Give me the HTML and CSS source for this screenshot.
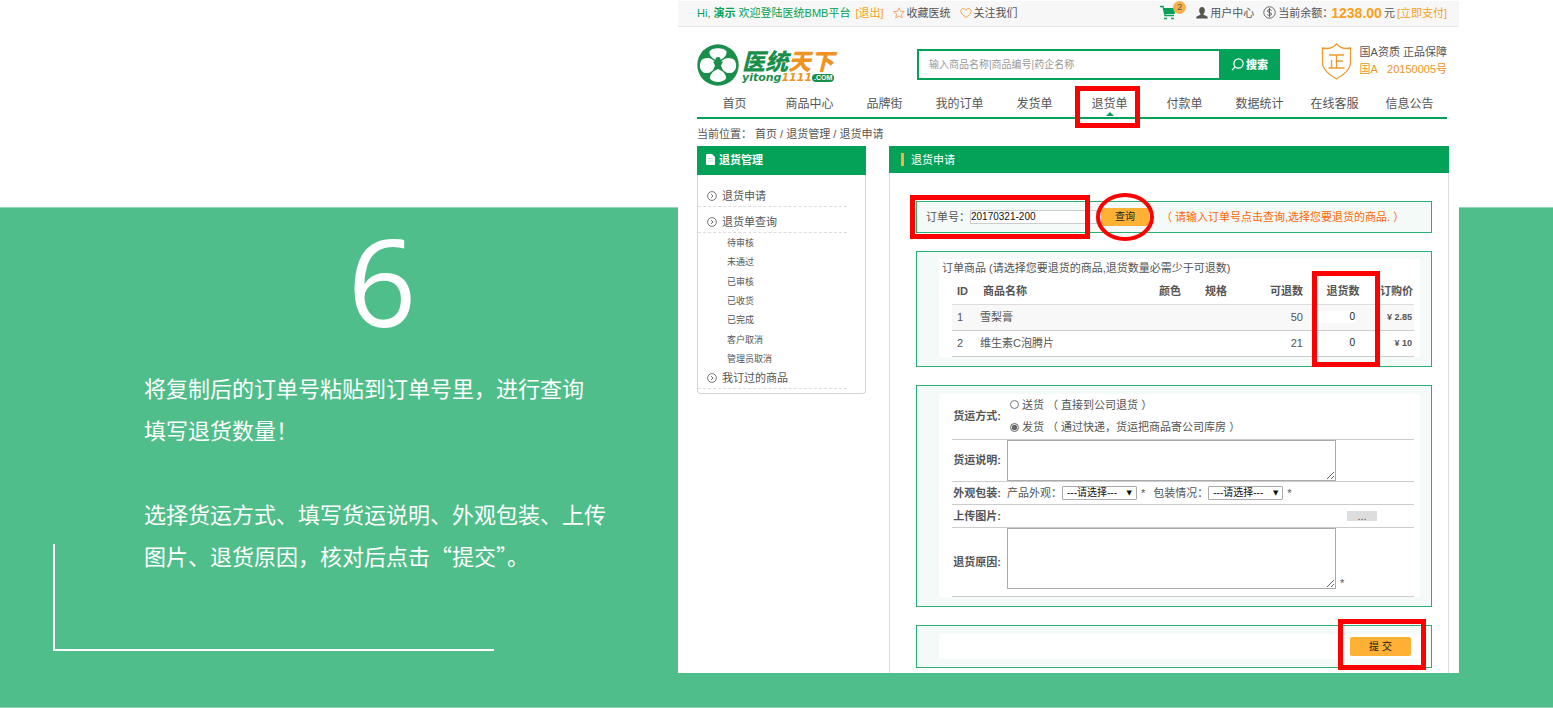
FILE: index.html
```html
<!DOCTYPE html>
<html lang="zh-CN">
<head>
<meta charset="utf-8">
<title>退货申请</title>
<link rel="stylesheet" href="styles.css">
</head>
<body>
<main class="slide">
  <section class="intro">
    <h1 class="step">6</h1>
    <div class="steps-text">
      <p>将复制后的订单号粘贴到订单号里，进行查询<br>填写退货数量！</p>
      <p>选择货运方式、填写货运说明、外观包装、上传<br>图片、退货原因，核对后点击“提交”。</p>
    </div>
    <div class="corner"></div>
  </section>

  <section class="shop">
    <header class="topbar">
      <span class="hello">Hi, <b>演示</b> 欢迎登陆医统BMB平台</span>
      <a class="accent" href="#">[退出]</a>
      <a class="with-icon" href="#"><svg width="12" height="12" viewBox="0 0 12 12" fill="none" stroke="#f7a470"><path d="M6 .8 7.5 4.3l3.8.3-2.9 2.5.9 3.8L6 8.900 2.700 10.900l.9-3.800L.7 4.600l3.800-.3z"/></svg>收藏医统</a>
      <a class="with-icon" href="#"><svg width="12" height="12" viewBox="0 0 12 12" fill="none" stroke="#f7a040"><path d="M6 10.500C3.500 8.500.8 6.500.8 4.200.8 1.300 4.500.6 6 3.200 7.500.6 11.200 1.300 11.200 4.200 11.200 6.500 8.500 8.500 6 10.500z"/></svg>关注我们</a>
      <a class="cart" href="#" aria-label="购物车"><svg width="17" height="15" viewBox="0 0 17 15"><path d="M0 1.500h3L5 10.500h9" fill="none" stroke="#04a258" stroke-width="1.300"/><path d="M3.500 3H16l-1.500 6H5z" fill="#04a258"/><path d="M4 13.500h3M11 13.500h3" stroke="#04a258" stroke-width="1.500"/></svg><span class="badge">2</span></a>
      <a class="with-icon" href="#"><svg width="12" height="12" viewBox="0 0 12 12" fill="#555"><ellipse cx="6" cy="3.600" rx="2.800" ry="3.500"/><path d="M4.500 6h3v1.800l3.500 1.400q.8.400.8 2.300H.2Q.2 9.600 1 9.200l3.500-1.400z"/></svg>用户中心</a>
      <span class="balance"><svg width="13" height="13" viewBox="0 0 13 13" fill="none" stroke="#666"><circle cx="6.500" cy="6.500" r="5.700"/><path d="M8.700 4.600Q8 3.600 6.500 3.600 4.600 3.600 4.600 5q0 1.200 1.900 1.500T8.500 8q0 1.400-2 1.400Q5 9.400 4.300 8.400M6.500 2v9"/></svg><span>当前余额：</span><strong>1238.00</strong><span class="unit">元</span><a class="accent" href="#">[立即支付]</a></span>
    </header>

    <div class="page">
      <div class="brandbar">
        <a class="logo" href="#">
          <svg width="42" height="42" viewBox="0 0 42 42"><circle cx="21" cy="21" r="20.700" fill="#1a8f4c"/><g fill="#fff"><path d="M18.500 16C14 13.500 12 10.500 12.500 7.500 14.500 3 27.500 3 29.500 7.500 30 10.500 28 13.500 23.500 16z"/><path d="M21 24C16 27 12.500 31 13 34.500 15.500 39 26.500 39 29 34.500 29.500 31 26 27 21 24z"/><path d="M18.500 18.500C15 13.500 10 13 6 15 1.500 18 2 26 6.500 28.500 12 30.500 18 27 18.500 18.500z"/><path d="M23.500 18.500C27 13.500 32 13 36 15 40.500 18 40 26 35.500 28.500 30 30.500 24 27 23.500 18.500z"/></g><g fill="#1a8f4c"><circle cx="21" cy="15.500" r="2.600"/><path d="M16 17.500 21 18l5-.5-2 4 1 5.500-4-2-4 2 1-5.500z"/></g></svg>
          <span class="logo-text"><span class="logo-cn">医统<em>天下</em></span><span class="logo-en">yitong<em>1111</em><small>.COM</small></span></span>
        </a>
        <form class="search">
          <input type="text" aria-label="搜索商品" placeholder="输入商品名称|商品编号|药企名称">
          <button type="button"><svg width="13" height="13" viewBox="0 0 13 13" fill="none" stroke="#fff" stroke-width="1.200"><circle cx="7.500" cy="5.500" r="4.600"/><path d="M4.200 8.800 1 12"/></svg>搜索</button>
        </form>
        <div class="cert">
          <svg width="31" height="37" viewBox="0 0 31 37" fill="none" stroke="#ef9a2a" stroke-width="1.300"><path d="M15.500 1Q20 5.500 25 5.500q2.500 0 4.500-.5v15q0 8-14 16Q1.500 28 1.500 20V5Q3.500 5.500 6 5.500 11 5.500 15.500 1z"/><path d="M8 12h15M15.500 12v13M15.500 18H22M10.500 17v8M7.500 25h16"/></svg>
          <p>国A资质 正品保障<br><span class="cert-no">国A&nbsp;&nbsp; 20150005号</span></p>
        </div>
      </div>

      <nav class="nav">
        <a href="#">首页</a><a href="#">商品中心</a><a href="#">品牌街</a><a href="#">我的订单</a><a href="#">发货单</a><a class="current" href="#">退货单<i class="mark mark-nav"></i></a><a href="#">付款单</a><a href="#">数据统计</a><a href="#">在线客服</a><a href="#">信息公告</a>
      </nav>
      <div class="crumbs">当前位置： <a href="#">首页</a> / <a href="#">退货管理</a> / <a href="#">退货申请</a></div>
    </div>

    <div class="columns">
      <aside class="side">
        <h2><svg width="9" height="11" viewBox="0 0 9 11" fill="#fff"><path d="M1 0h5l3 3v7q0 1-1 1H1q-1 0-1-1V1q0-1 1-1z"/><path d="M2 4.500h5M2 7h5" stroke="#bfe5d0"/></svg>退货管理</h2>
        <div class="side-body">
          <a class="group" href="#"><svg width="10" height="10" viewBox="0 0 10 10" fill="none" stroke="#777"><circle cx="5" cy="5" r="4.400"/><path d="M4 3l2 2-2 2"/></svg>退货申请</a>
          <a class="group spaced" href="#"><svg width="10" height="10" viewBox="0 0 10 10" fill="none" stroke="#777"><circle cx="5" cy="5" r="4.400"/><path d="M4 3l2 2-2 2"/></svg>退货单查询</a>
          <ul class="subs">
            <li><a href="#">待审核</a></li><li><a href="#">未通过</a></li><li><a href="#">已审核</a></li><li><a href="#">已收货</a></li><li><a href="#">已完成</a></li><li><a href="#">客户取消</a></li><li><a href="#">管理员取消</a></li>
          </ul>
          <a class="group" href="#"><svg width="10" height="10" viewBox="0 0 10 10" fill="none" stroke="#777"><circle cx="5" cy="5" r="4.400"/><path d="M4 3l2 2-2 2"/></svg>我订过的商品</a>
        </div>
      </aside>

      <div class="panel">
        <h2>退货申请</h2>
        <form class="panel-body">
          <div class="box lookup">
            <span class="lookup-field"><label for="order">订单号：</label><input id="order" type="text" value="20170321-200"><i class="mark mark-order"></i></span>
            <span class="query"><button class="btn" type="button">查询</button><i class="mark mark-query"></i></span>
            <span class="hint">（ 请输入订单号点击查询,选择您要退货的商品. ）</span>
          </div>

          <div class="box">
            <div class="sheet goods">
              <p class="caption">订单商品 (请选择您要退货的商品,退货数量必需少于可退数)</p>
              <table>
                <thead><tr><th class="c-id">ID</th><th class="c-name">商品名称</th><th class="c-attr">颜色</th><th class="c-attr">规格</th><th class="c-max">可退数</th><th class="c-qty">退货数<i class="mark mark-qty"></i></th><th class="c-price">订购价</th></tr></thead>
                <tbody>
                  <tr class="odd"><td>1</td><td>雪梨膏</td><td></td><td></td><td class="c-max">50</td><td class="c-qty"><input type="text" aria-label="雪梨膏退货数" value="0"></td><td class="c-price">¥ 2.85</td></tr>
                  <tr><td>2</td><td>维生素C泡腾片</td><td></td><td></td><td class="c-max">21</td><td class="c-qty"><input type="text" aria-label="维生素C泡腾片退货数" value="0"></td><td class="c-price">¥ 10</td></tr>
                </tbody>
              </table>
            </div>
          </div>

          <div class="box">
            <div class="sheet fields">
              <div class="row" role="radiogroup" aria-labelledby="ship">
                <span class="name" id="ship">货运方式:</span>
                <div class="radios">
                  <label><input type="radio" name="ship">送货 （ 直接到公司退货 ）</label>
                  <label><input type="radio" name="ship" checked>发货 （ 通过快递，货运把商品寄公司库房 ）</label>
                </div>
              </div>
              <div class="row">
                <label class="name" for="note">货运说明:</label>
                <textarea class="short" id="note"></textarea>
              </div>
              <div class="row">
                <span class="name">外观包装:</span>
                <div class="selects">
                  <label for="look">产品外观：</label><span class="select"><select id="look"><option>---请选择---</option></select></span><span class="req">*</span>
                  <label class="second" for="pack">包装情况：</label><span class="select"><select id="pack"><option>---请选择---</option></select></span><span class="req">*</span>
                </div>
              </div>
              <div class="row upload">
                <span class="name">上传图片:</span>
                <button type="button" aria-label="选择图片">...</button>
              </div>
              <div class="row">
                <label class="name" for="reason">退货原因:</label>
                <textarea class="tall" id="reason"></textarea><span class="req low">*</span>
              </div>
            </div>
          </div>

          <div class="box">
            <div class="sheet submit">
              <span class="send"><button class="btn" type="button">提 交</button><i class="mark mark-send"></i></span>
            </div>
          </div>
        </form>
      </div>
    </div>
  </section>
</main>
</body>
</html>
```

FILE: styles.css
```css
* { box-sizing: border-box; }

body {
  margin: 0;
  background: #fff;
  color: #555;
  font: 11px/16px "Liberation Sans", "Noto Sans CJK SC", sans-serif;
}
h1, h2, p, ul { margin: 0; padding: 0; font-weight: normal; }
ul { list-style: none; }
a { color: inherit; text-decoration: none; }
em, i { font-style: normal; }
svg { display: block; flex: none; }
input, button, select, textarea { margin: 0; padding: 0; border: 0; border-radius: 0; font: inherit; color: inherit; }

.slide {
  display: grid;
  grid-template-columns: minmax(0, 678fr) minmax(0, 781fr) minmax(0, 94fr);
  align-items: start;
  min-height: 100vh;
  padding-bottom: 34px;
  border-bottom: 1px solid #93d6b7;
  background: linear-gradient(#fff 207px, #93d6b7 207px, #93d6b7 208px, #4fbe8a 208px);
}

/* Instruction column */
.intro { position: relative; align-self: stretch; padding-top: 208px; color: #fff; }
.step { padding-left: 86px; text-align: center; font: 120px/146px "Open Sans", sans-serif; }
.steps-text {
  display: grid;
  gap: 42px;
  padding: 12px 0 0 144px;
  font: 22px/42px "Noto Sans CJK SC", sans-serif;
  white-space: nowrap;
}
.corner {
  position: absolute;
  left: 53px;
  right: 184px;
  bottom: 22px;
  height: 107px;
  border: solid #fff;
  border-width: 0 0 2px 2px;
}

/* Shop page */
.shop { background: #fff; border-top: 1px solid #fff; white-space: nowrap; }
.topbar {
  display: flex;
  align-items: center;
  height: 26px;
  padding: 0 12px 2px 19px;
  border-bottom: 1px solid #e8e8e8;
  background: #f7f7f7;
  gap: 9px;
}
.hello { color: #04a258; }
.hello + .accent { margin-left: -4px; }
.accent { color: #f7a11a; }
.with-icon, .balance { display: flex; align-items: center; gap: 2px; }
.cart { position: relative; margin-left: auto; margin-right: 10px; }
.badge {
  position: absolute;
  left: 13px;
  top: -4px;
  width: 13px;
  height: 13px;
  border-radius: 50%;
  background: #f9b04c;
  color: #555;
  font-size: 9px;
  line-height: 13px;
  text-align: center;
}
.balance strong { margin-left: -4px; color: #f7a11a; font-size: 14px; }

.page { padding: 0 12px 0 19px; }
.brandbar { display: flex; align-items: flex-start; padding-top: 16px; }
.logo { display: flex; gap: 3px; width: 220px; padding-top: 1px; }
.logo-text { display: flex; flex-direction: column; padding-top: 5px; color: #1a8f4c; }
.logo em { color: #ef9423; font-style: italic; }
.logo-cn { font: italic 900 23px/22px "Noto Sans CJK SC", sans-serif; }
.logo-en { display: flex; align-items: center; font: italic bold 11px/13px "DejaVu Sans", sans-serif; }
.logo-en small { padding: 0 2px; border-radius: 4px; background: #1a8f4c; color: #fff; font: bold 7px/8px "Liberation Sans", sans-serif; }

.search { display: flex; flex: 0 1 363px; height: 31px; margin-top: 6px; border: solid #04a258; border-width: 2px 0 2px 2px; }
.search input { flex: 1; min-width: 0; padding-left: 10px; background: #fff; font-size: 10px; }
.search input::placeholder { color: #999; opacity: 1; }
.search button {
  display: flex;
  align-items: center;
  justify-content: center;
  gap: 2px;
  width: 61px;
  background: #04a258;
  color: #fff;
  font-weight: 900;
}
.cert { display: flex; gap: 8px; margin-left: auto; }
.cert p { padding-top: 1px; line-height: 17px; }
.cert-no { color: #ef9423; }

.nav {
  display: grid;
  grid-template-columns: repeat(10, 1fr);
  margin-top: 6px;
  border-bottom: 2px solid #04a258;
  font-size: 12px;
  line-height: 25px;
  text-align: center;
}
.nav a { position: relative; }
.current::after {
  content: "";
  position: absolute;
  left: 50%;
  bottom: 1px;
  margin-left: -4px;
  border: solid transparent;
  border-width: 0 4px 4px;
  border-bottom-color: #04a258;
}
.crumbs { padding: 7px 0 4px; }

/* Highlights around the controls to use */
.mark { position: absolute; z-index: 2; border: 5px solid #f00; pointer-events: none; }
.mark-nav { left: 3px; right: 7px; top: -6px; height: 42px; }
.mark-order { left: -16px; right: 7px; top: -14px; bottom: -14px; }
.mark-query { left: -5px; right: -5px; top: -15px; bottom: -15px; border-width: 4px; border-radius: 50%; }
.mark-qty { left: 6px; right: 0; top: -8px; height: 96px; }
.mark-send { left: -12px; right: -15px; top: -18px; bottom: -14px; }

.columns { display: grid; grid-template-columns: minmax(0, 169fr) minmax(0, 560fr); gap: 23px; padding: 0 10px 0 19px; }
.side { align-self: start; }
.side h2 { display: flex; align-items: center; gap: 4px; height: 29px; padding: 0 0 2px 9px; background: #04a258; color: #fff; font-size: 11px; font-weight: bold; }
.side-body { padding: 12px 18px 4px 0; border: 1px solid #d4d4d4; border-top: 0; border-radius: 0 0 4px 4px; }
.group { display: flex; align-items: center; gap: 5px; height: 20px; padding: 0 0 2px 9px; border-bottom: 1px dashed #ddd; }
.spaced { margin-top: 6px; }
.subs { display: grid; grid-auto-rows: 1fr; align-items: center; min-height: 136px; padding-left: 29px; font-size: 9px; line-height: 16px; }

.panel h2 { display: flex; align-items: center; gap: 7px; height: 27px; padding-left: 12px; background: #04a258; color: #fff; font-size: 11px; }
.panel h2::before { content: ""; width: 3px; height: 13px; background: #fbb034; }
.panel-body { display: grid; gap: 18px; padding: 28px 16px 5px 26px; border: solid #ddd; border-width: 0 1px; }
.box { border: 1px solid #2bae71; background: #f4faf7; min-width: 0; }
.sheet { margin: 7px 11px 9px 22px; padding: 0 6px 0 13px; background: #fff; }

.lookup { display: flex; align-items: center; height: 32px; padding-left: 9px; }
.lookup-field { position: relative; display: flex; align-items: center; height: 16px; }
.lookup input { width: 127px; height: 14px; border: 1px solid #ccc; background: #fff; color: #111; font-size: 10px; }
.query, .send { position: relative; display: flex; margin-left: 4px; }
.btn { border-radius: 2px; background: #ffb135; color: #222; }
.query .btn { width: 48px; height: 18px; font-size: 10px; line-height: 18px; }
.hint { margin-left: 12px; color: #f60; }

.caption { margin-left: -10px; padding-bottom: 1px; line-height: 19px; }
.goods table { width: 100%; table-layout: fixed; border-collapse: collapse; }
.goods th, .goods td { height: 26px; padding: 0; border-bottom: 1px solid #ccc; text-align: left; }
.goods th { position: relative; height: 25px; border-color: #ddd; }
.goods td:first-child, .goods .c-id { padding-left: 5px; }
.goods .c-name { padding-left: 3px; }
.c-id { width: 28px; }
.c-attr { width: 46px; }
.c-max { width: 55px; }
.c-qty { width: 74px; }
.c-price { width: 34px; }
.goods .c-max { padding-right: 3px; text-align: right; }
.goods .c-qty { text-align: center; }
.goods .c-price { padding-right: 2px; text-align: right; }
.goods td.c-price { font-size: 9px; font-weight: bold; }
.c-qty input { display: block; width: 38px; height: 12px; margin-left: 12px; padding-right: 1px; background: #fff; color: #222; font-size: 10px; text-align: right; }
.odd { background: #f8f8f8; }

.fields { margin-top: 8px; }
.row { display: flex; align-items: center; border-bottom: 1px solid #ccc; }
.name { flex: none; width: 49px; margin-right: 6px; text-align: right; font-weight: bold; }
.radios label { display: flex; align-items: center; height: 22px; }
.radios label + label { height: 23px; }
.radios input { width: 9px; height: 9px; margin: 0 3px; accent-color: #666; }
textarea { flex: 0 1 329px; min-width: 0; border: 1px solid #a9a9a9; background: #fff; }
.short { height: 41px; }
.tall { height: 61px; margin-bottom: 7px; }
.selects { display: flex; align-items: center; height: 22px; }
.second { margin-left: 8px; }
.select { position: relative; display: flex; }
select { appearance: none; width: 75px; height: 14px; padding-left: 4px; border: 1px solid #aaa; border-radius: 1px; background: #fff; color: #111; font-size: 10px; line-height: 12px; }
.select::after { content: "▼"; position: absolute; right: 5px; top: 0; color: #111; font: 7px/14px "DejaVu Sans", sans-serif; pointer-events: none; }
.req { padding-left: 4px; }
.low { align-self: flex-end; padding-bottom: 5px; }
.upload { height: 23px; }
.upload button { width: 30px; height: 10px; margin-left: auto; margin-right: 37px; background: #ddd; line-height: 8px; }

.submit { display: flex; justify-content: flex-end; height: 25px; margin-top: 8px; margin-bottom: 8px; padding: 3px 9px 3px 0; }
.send .btn { width: 61px; height: 19px; font-size: 10px; line-height: 19px; }
```
